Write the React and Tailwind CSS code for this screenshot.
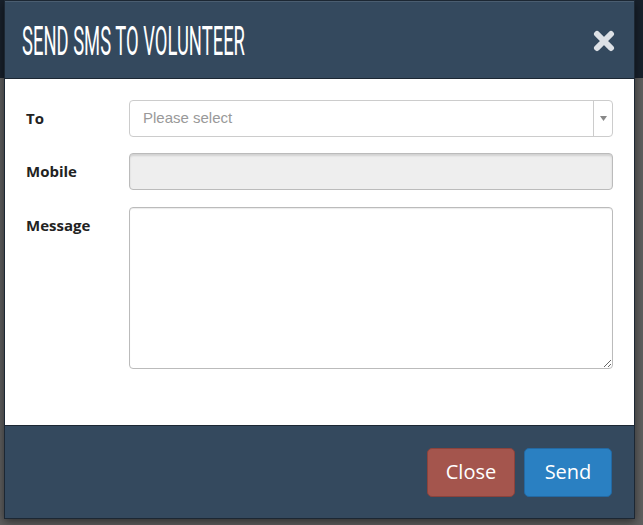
import React from "react";

export default function App() {
  return (
    <div className="relative w-full h-[525px] overflow-hidden bg-[#5f5f5f]">
      <div className="absolute left-0 top-0 w-full h-[78px] bg-[#18212c]" />
      <div className="relative ml-[4px] w-[631px] border border-[#1c2733] shadow-[0_3px_9px_rgba(0,0,0,0.5)]">
        {/* Header */}
        <div className="h-[77px] bg-[#34495e] border-t border-t-[#4a5d70] flex items-center justify-between pl-[17px] pr-[19px]">
          <span
            className="inline-block origin-left scale-x-[0.46] whitespace-nowrap text-white text-[40px] leading-none mt-[3px]"
            style={{ fontFamily: "Roboto, 'Liberation Sans', sans-serif" }}
          >
            SEND SMS TO VOLUNTEER
          </span>
          <svg width="22" height="22" viewBox="0 0 22 22" className="mt-[2px]">
            <path d="M4 4 L18 18 M18 4 L4 18" stroke="#dde1e6" strokeWidth="6" strokeLinecap="round" />
          </svg>
        </div>
        {/* Body */}
        <div
          className="bg-white h-[347px] border-t border-t-[#1c2733] pt-[21px] pl-[21px] pr-[21px] flex flex-col gap-[16px]"
          style={{ fontFamily: "'Open Sans', sans-serif" }}
        >
          <div className="flex">
            <div className="w-[103px] h-[37px] flex items-center text-[15px] font-bold text-[#222]">To</div>
            <div className="flex-1 h-[37px] border border-[#ccc] rounded-[4px] flex items-stretch bg-white">
              <div
                className="flex-1 flex items-center pl-[13px] text-[15px] text-[#999]"
                style={{ fontFamily: "'Liberation Sans', Arial, sans-serif" }}
              >
                Please select
              </div>
              <div className="w-[19px] border-l border-l-[#ccc] flex items-center justify-center">
                <svg width="7" height="5" viewBox="0 0 7 5">
                  <path d="M0 0 L7 0 L3.5 5 Z" fill="#888" />
                </svg>
              </div>
            </div>
          </div>
          <div className="flex">
            <div className="w-[103px] h-[37px] flex items-center text-[15px] font-bold text-[#222]">Mobile</div>
            <div className="flex-1 h-[37px] border border-[#bbb] rounded-[4px] bg-[#eeeeee] shadow-[inset_0_2px_2px_rgba(0,0,0,0.12)]" />
          </div>
          <div className="flex mt-[1px]">
            <div className="w-[103px] h-[37px] flex items-center text-[15px] font-bold text-[#222]">Message</div>
            <textarea className="flex-1 h-[162px] border border-[#bbb] rounded-[4px] bg-white shadow-[inset_0_1px_1px_rgba(0,0,0,0.08)] outline-none" />
          </div>
        </div>
        {/* Footer */}
        <div className="h-[93px] bg-[#34495e] border-t border-t-[#1c2733] flex items-center justify-end gap-[9px] pr-[22px]">
          <button
            className="w-[88px] h-[49px] rounded-[5px] bg-[#a4554d] border border-[#8b433c] text-white text-[20px]"
            style={{ fontFamily: "'Open Sans', sans-serif" }}
          >
            Close
          </button>
          <button
            className="w-[88px] h-[49px] rounded-[5px] bg-[#2a80c2] border border-[#2369a3] text-white text-[20px]"
            style={{ fontFamily: "'Open Sans', sans-serif" }}
          >
            Send
          </button>
        </div>
      </div>
    </div>
  );
}
